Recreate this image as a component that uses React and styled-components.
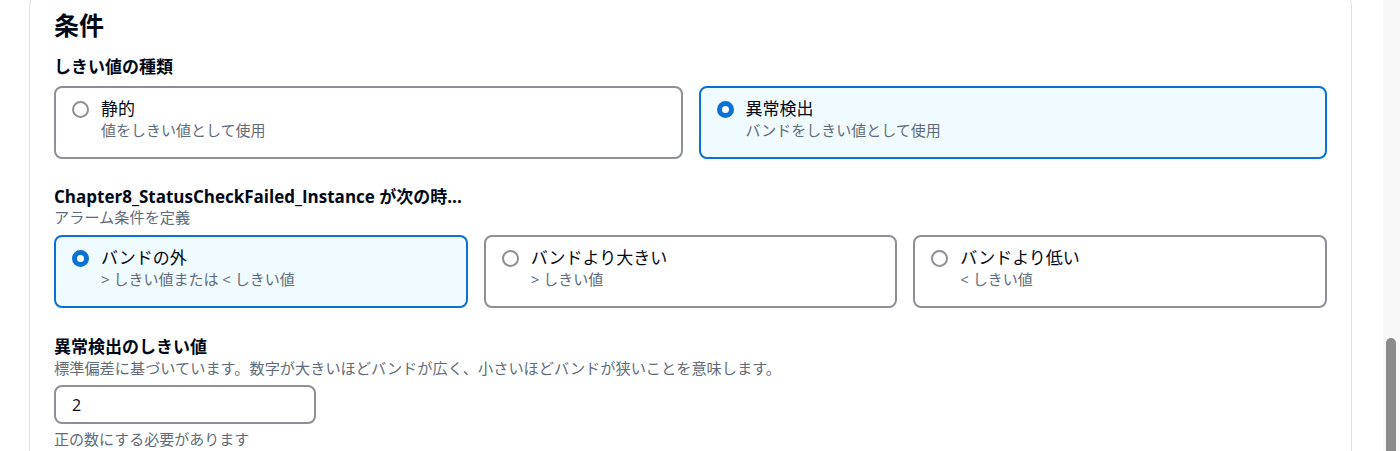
import styled, { createGlobalStyle } from "styled-components";

const GlobalStyle = createGlobalStyle`
  html, body {
    margin: 0;
    padding: 0;
    background: #ffffff;
    overflow: hidden;
  }
  body {
    font-family: "Open Sans", "Noto Sans CJK JP", sans-serif;
    color: #000716;
  }
`;

const Page = styled.div`
  display: flex;
  height: 451px;
  overflow: hidden;
`;

const Main = styled.main`
  flex: 1;
  padding: 0 31px 0 29px;
`;

const Card = styled.section`
  margin-top: -10px;
  border: 1px solid #dedfe3;
  border-radius: 16px;
  padding: 18px 24px 20px 24px;
  min-height: 480px;
`;

const Title = styled.h2`
  margin: 0 0 15px;
  font-size: 25px;
  line-height: 32px;
  font-weight: 700;
`;

const Field = styled.div`
  margin-top: ${(p) => p.$gap || 0}px;
`;

const FieldLabel = styled.div`
  font-size: 17px;
  line-height: ${(p) => p.$lh || 22}px;
  font-weight: 700;
`;

const FieldHint = styled.div`
  font-size: 15.2px;
  line-height: ${(p) => p.$lh || 20}px;
  color: #5f6b7a;
`;

const TileGrid = styled.div`
  display: grid;
  grid-template-columns: repeat(${(p) => p.$cols}, 1fr);
  gap: 16px;
  margin-top: ${(p) => p.$gap}px;
`;

const Tile = styled.label`
  display: block;
  height: 73px;
  box-sizing: border-box;
  padding: 10px 16px 16px;
  border: 2px solid ${(p) => (p.$checked ? "#0972d3" : "#8d9096")};
  border-radius: 8px;
  background: ${(p) => (p.$checked ? "#f0fbff" : "#ffffff")};
  cursor: pointer;
`;

const TileHead = styled.div`
  display: flex;
  align-items: center;
  gap: 12px;
  height: 22px;
`;

const RadioMark = styled.span`
  width: 17px;
  height: 17px;
  box-sizing: border-box;
  border-radius: 50%;
  background: #ffffff;
  border: ${(p) => (p.$checked ? "5px solid #0972d3" : "2px solid #8d9096")};
  flex-shrink: 0;
`;

const TileLabel = styled.span`
  font-size: 17px;
  line-height: 22px;
`;

const TileDesc = styled.div`
  padding-left: 29px;
  font-size: 15px;
  line-height: 20px;
  color: #5f6b7a;
`;

const NumberInput = styled.input`
  display: block;
  margin-top: 6px;
  width: 262px;
  height: 39px;
  box-sizing: border-box;
  padding: 0 16px;
  border: 2px solid #8d9096;
  border-radius: 8px;
  font-family: "Open Sans", "Noto Sans CJK JP", sans-serif;
  font-size: 16px;
  color: #000716;
  background: #ffffff;
  outline: none;
`;

const Constraint = styled.div`
  margin-top: 5px;
  font-size: 15px;
  line-height: 20px;
  color: #5f6b7a;
`;

const Scrollbar = styled.div`
  width: 17px;
  background: #f8f8f8;
  padding: 338px 4px 0 3px;
  box-sizing: border-box;
`;

const Thumb = styled.div`
  height: 160px;
  border-radius: 5px;
  background: #8b8b8b;
`;

function RadioTile({ label, desc, checked }) {
  return (
    <Tile $checked={checked}>
      <TileHead>
        <RadioMark $checked={checked} />
        <TileLabel>{label}</TileLabel>
      </TileHead>
      <TileDesc>{desc}</TileDesc>
    </Tile>
  );
}

const thresholdTypes = [
  { label: "静的", desc: "値をしきい値として使用", checked: false },
  { label: "異常検出", desc: "バンドをしきい値として使用", checked: true },
];

const conditions = [
  { label: "バンドの外", desc: "> しきい値または < しきい値", checked: true },
  { label: "バンドより大きい", desc: "> しきい値", checked: false },
  { label: "バンドより低い", desc: "< しきい値", checked: false },
];

export default function App() {
  return (
    <>
      <GlobalStyle />
      <Page>
        <Main>
          <Card>
            <Title>条件</Title>
            <FieldLabel>しきい値の種類</FieldLabel>
            <TileGrid $cols={2} $gap={8}>
              {thresholdTypes.map((t) => (
                <RadioTile key={t.label} {...t} />
              ))}
            </TileGrid>

            <Field $gap={28}>
              <FieldLabel $lh={20}>Chapter8_StatusCheckFailed_Instance が次の時...</FieldLabel>
              <FieldHint>アラーム条件を定義</FieldHint>
            </Field>
            <TileGrid $cols={3} $gap={8}>
              {conditions.map((c) => (
                <RadioTile key={c.label} {...c} />
              ))}
            </TileGrid>

            <Field $gap={28}>
              <FieldLabel $lh={22}>異常検出のしきい値</FieldLabel>
              <FieldHint $lh={21}>
                標準偏差に基づいています。数字が大きいほどバンドが広く、小さいほどバンドが狭いことを意味します。
              </FieldHint>
              <NumberInput type="text" value="2" readOnly />
              <Constraint>正の数にする必要があります</Constraint>
            </Field>
          </Card>
        </Main>
        <Scrollbar>
          <Thumb />
        </Scrollbar>
      </Page>
    </>
  );
}
